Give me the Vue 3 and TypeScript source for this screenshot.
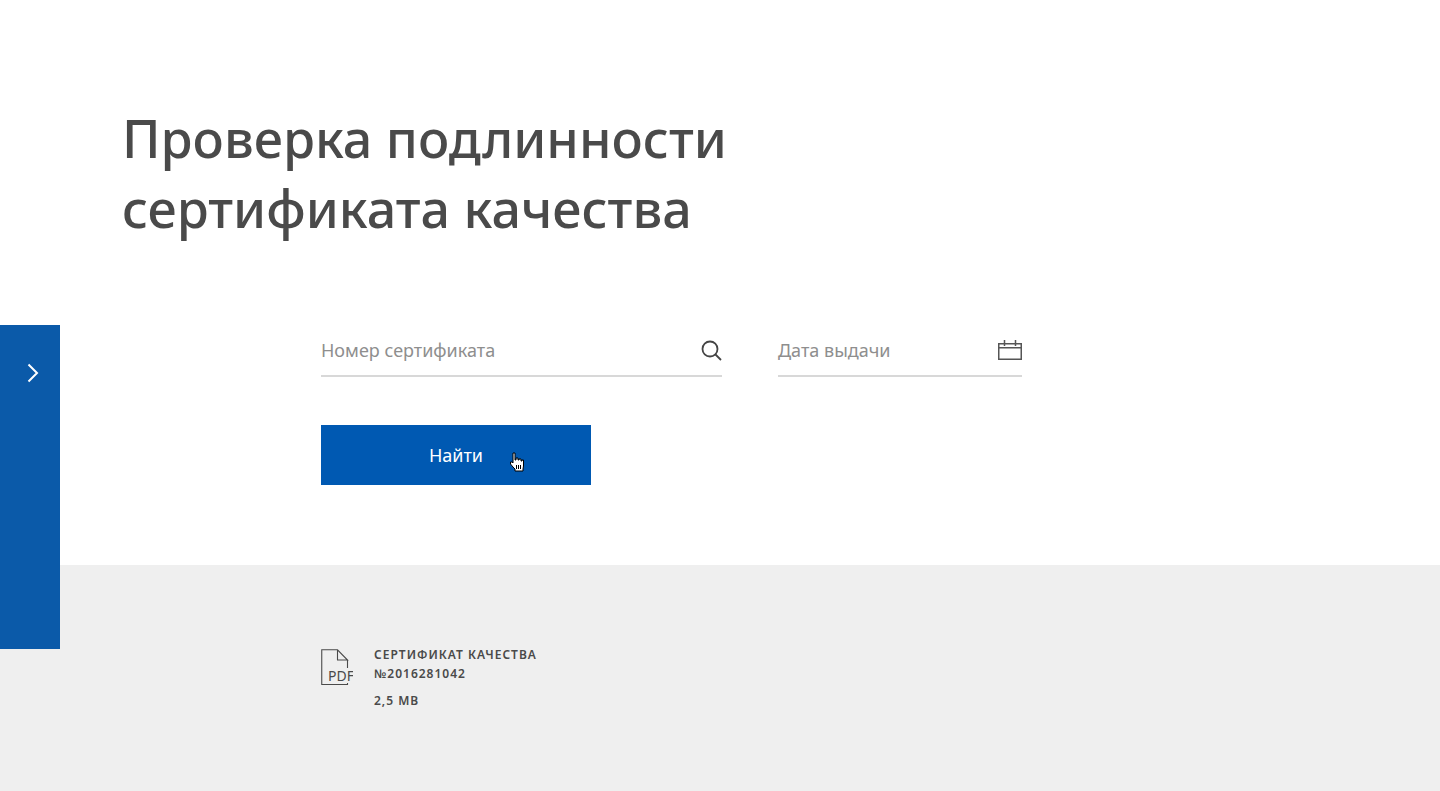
<script setup lang="ts">
const fileLines = ['СЕРТИФИКАТ КАЧЕСТВА', '№2016281042']
</script>

<template>
  <div class="page">
    <aside class="tab">
      <svg class="chev" width="12" height="20" viewBox="0 0 12 20"><path d="M1.5 1.5 10 10l-8.500 8.500" fill="none" stroke="#fff" stroke-width="2"/></svg>
    </aside>

    <section class="top">
      <h1 class="title">Проверка подлинности<br>сертификата качества</h1>

      <form class="form" @submit.prevent>
        <div class="fields">
          <label class="field f-num">
            <span class="ph">Номер сертификата</span>
            <svg width="22" height="22" viewBox="0 0 22 22"><circle cx="10" cy="10" r="7.500" fill="none" stroke="#444" stroke-width="1.800"/><path d="m15.500 15.500 5.500 5.500" stroke="#444" stroke-width="1.800" fill="none"/></svg>
          </label>
          <label class="field f-date">
            <span class="ph">Дата выдачи</span>
            <svg width="24" height="22" viewBox="0 0 24 22"><path d="M.75 4.750h22.500v15.500H.75zM.75 8.750h22.500M6.500 1v6M17.500 1v6" fill="none" stroke="#555" stroke-width="1.500"/></svg>
          </label>
        </div>
        <button class="btn" type="button">
          Найти
          <svg class="cursor" width="16" height="21" viewBox="0 0 16 21"><path d="M4 1h2v7h1V6h2v2h1V7h2v2h1v-1h1.500v6L14 17v2H6v-2l-2-2-2.500-3V10H3l1 1z" fill="#fff" stroke="#000" stroke-width="1"/><path d="M7.500 13v4M9.500 13v4M11.500 13v4" stroke="#000" stroke-width="1"/></svg>
        </button>
      </form>
    </section>

    <section class="bottom">
      <div class="file">
        <svg class="pdf" width="32" height="37" viewBox="0 0 32 37">
          <path d="M26.500 11V35.500H.75V.75H16.500L26.500 11H16.500V.75" fill="none" stroke="#4a4a4a" stroke-width="1.100"/>
          <rect x="6" y="19" width="26" height="15" fill="#efefef"/>
          <text x="7" y="32" class="pdf-t">PDF</text>
        </svg>
        <div class="meta">
          <div class="name"><div v-for="l in fileLines" :key="l">{{ l }}</div></div>
          <div class="size">2,5 MB</div>
        </div>
      </div>
    </section>
  </div>
</template>

<style scoped>
.page { position: relative; width: 1440px; height: 791px; overflow: hidden; background: #fff; font-family: "Noto Sans", "Open Sans", sans-serif; color: #4a4a4a }
.tab { position: absolute; left: 0; top: 325px; width: 60px; height: 324px; background: #0b5aa9; z-index: 2 }
.chev { position: absolute; left: 27px; top: 38px }
.top { height: 565px; box-sizing: border-box; padding: 103px 0 0 122px }
.title { margin: 0; font-size: 52px; line-height: 70px; font-weight: 500; color: #4a4a4a }
.form { margin: 82px 0 0 199px }
.fields { display: flex; gap: 56px }
.field { display: flex; align-items: center; justify-content: space-between; height: 50px; border-bottom: 2px solid #d8d8d8; box-sizing: content-box }
.f-num { width: 401px }
.f-date { width: 244px }
.ph { font-size: 18px; color: #8e8e8e }
.btn { position: relative; display: block; margin-top: 48px; width: 270px; height: 60px; border: 0; background: #0059b2; color: #fff; font: 18px "Noto Sans", "Open Sans", sans-serif; padding: 0 }
.cursor { position: absolute; left: 188px; top: 27px }
.bottom { height: 226px; background: #efefef; box-sizing: border-box; padding: 80px 0 0 321px }
.file { display: flex; gap: 21px }
.pdf { margin-top: 4px }
.pdf-t { font: 14px "Noto Sans", sans-serif; fill: #4a4a4a }
.meta { font-size: 12px; font-weight: 600; letter-spacing: 1px; line-height: 19px; color: #4a4a4a }
.size { margin-top: 8px }
</style>
